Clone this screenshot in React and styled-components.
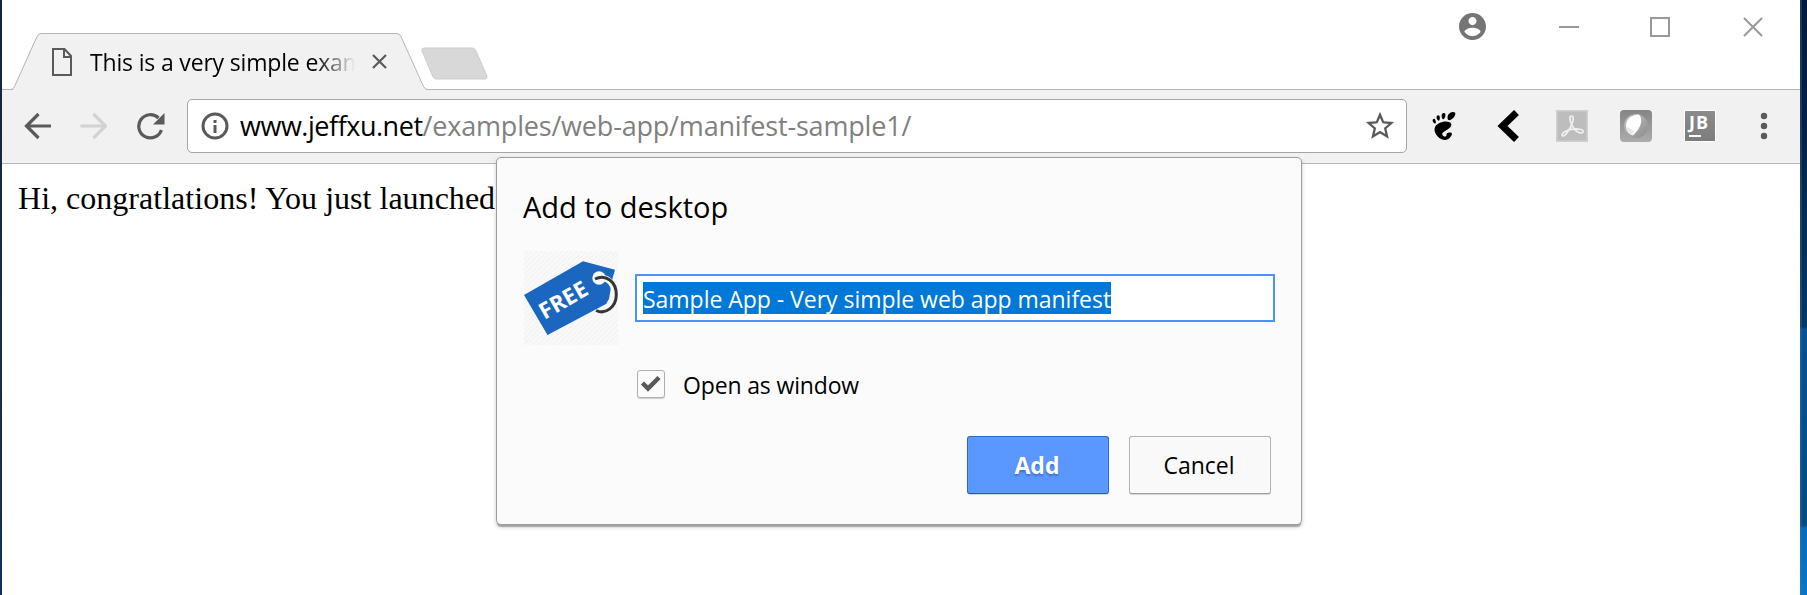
import React from 'react';
import styled, { createGlobalStyle } from 'styled-components';
import { SiGnome } from 'react-icons/si';

const ui = '"Open Sans", "Noto Sans", sans-serif';
const line = '#b6b4b6';
const ink = '#5a5a5a';

const GlobalStyle = createGlobalStyle`
  *, *::before, *::after { box-sizing: border-box; }
  body { margin: 0; overflow: hidden; background: #fff; font-family: ${ui}; color: #000; }
  svg { display: block; flex: none; }
`;

const Desktop = styled.div`
  display: flex;
  width: 1807px;
  height: 595px;
  overflow: hidden;
`;

const LeftEdge = styled.div`
  width: 2px;
  background: linear-gradient(#12233c, #1c2d47 60%, #12305a);
`;

const RightEdge = styled.div`
  width: 7px;
  border-left: 2px solid rgba(90, 110, 130, 0.35);
  background: linear-gradient(#001a3c 0, #002048 120px, #003868 327px, #00529a 329px, #004f90 420px, #004c88 525px, #006cc4 528px, #0078d2 595px);
  background-origin: border-box;
`;

const Browser = styled.div`
  position: relative;
  display: flex;
  flex-direction: column;
  width: 1798px;
  background: #fff;
`;

const TitleBar = styled.header`
  display: flex;
  align-items: flex-end;
  height: 90px;
  padding-left: 9px;
  box-shadow: inset 0 -1px ${line};
`;

const Tab = styled.div`
  position: relative;
  display: flex;
  align-items: center;
  width: 417px;
  height: 57px;
  padding: 0 0 0 41px;
`;

const TabShape = styled.svg`
  position: absolute;
  inset: 0;
`;

const TabTitle = styled.span`
  position: relative;
  width: 265px;
  margin: 0 17px 0 18px;
  overflow: hidden;
  white-space: nowrap;
  font-size: 23px;
  line-height: 36px;
  letter-spacing: -0.17px;
  mask-image: linear-gradient(90deg, #000 225px, transparent 265px);
`;

const TabIcon = styled.svg`
  position: relative;
`;

const NewTab = styled.svg`
  margin: 0 0 9px -8px;
`;

const Controls = styled.div`
  display: flex;
  align-items: center;
  align-self: flex-start;
  height: 54px;
  margin-left: auto;
  padding-right: 37px;
  gap: 71px;
`;

const Avatar = styled.svg`
  margin: 0 2px 2px 0;
`;

const WindowIcon = styled.svg`
  margin-right: ${(p) => p.$after || 0}px;
  fill: none;
  stroke: #999;
  stroke-width: 2;
`;

const Toolbar = styled.div`
  display: flex;
  align-items: center;
  height: 74px;
  padding: 0 20px 2px 21px;
  background: #f1f1f1;
  border-bottom: 1px solid ${line};
`;

const NavButtons = styled.div`
  display: flex;
  flex: none;
  gap: 28px;
  width: 164px;
`;

const NavIcon = styled.svg`
  fill: none;
  stroke: ${(p) => (p.$disabled ? '#d2d2d2' : ink)};
  stroke-width: 3.2;
`;

const Omnibox = styled.div`
  display: flex;
  flex: none;
  align-items: center;
  width: 1220px;
  height: 54px;
  padding: 0 9px 0 13px;
  background: #fff;
  border: 1px solid #a5a5a5;
  border-radius: 5px;
`;

const Url = styled.div`
  flex: 1;
  padding-left: 11px;
  font-size: 27px;
  line-height: 50px;
  letter-spacing: -0.19px;
  color: #808080;
`;

const Host = styled.span`
  color: #000;
  letter-spacing: -0.47px;
`;

const Extensions = styled.div`
  display: flex;
  align-items: center;
  flex: none;
  gap: 32px;
  margin-left: 21px;
`;

const ExtensionSlot = styled.div`
  display: flex;
  align-items: center;
  justify-content: center;
  width: 32px;
  height: 32px;
`;

const JetBrains = styled.div`
  width: 32px;
  height: 32px;
  padding: 1px 0 0 4px;
  border: 1.5px solid #fff;
  background: linear-gradient(#8c8c8c, #7c7c7c);
  color: #fff;
  font: 700 18px/21px ${ui};
  letter-spacing: 1px;
`;

const Underscore = styled.div`
  width: 12px;
  height: 2px;
  margin-top: 2px;
  background: #fff;
`;

const Page = styled.main`
  padding: 17px 16px;
  font: 32px/35px "Liberation Serif", serif;
  letter-spacing: 0.02px;
  white-space: nowrap;
`;

const Dialog = styled.section`
  position: absolute;
  top: 157px;
  left: 494px;
  width: 806px;
  height: 368px;
  padding: 29px 26px 30px 27px;
  background: #fbfbfb;
  border: 1px solid #9d9d9d;
  border-radius: 5px;
  box-shadow: 0 3px 1px -1px rgba(0, 0, 0, 0.25), 0 2px 4px rgba(0, 0, 0, 0.2);
`;

const Heading = styled.h1`
  margin: 0 0 0 -1px;
  font-size: 29px;
  font-weight: 400;
  line-height: 40px;
`;

const NameRow = styled.div`
  display: flex;
  align-items: center;
  gap: 17px;
  height: 94px;
  margin-top: 24px;
`;

const AppIcon = styled.div`
  width: 94px;
  height: 94px;
  background: repeating-linear-gradient(135deg, #f9f9f9 0 2px, #f4f4f4 2px 3.5px);
`;

const NameField = styled.div`
  width: 640px;
  height: 48px;
  padding: 6px;
  border: 2px solid #4d90fe;
  background: #fff;
`;

const Selection = styled.span`
  display: block;
  width: 468px;
  height: 32px;
  background: #0078d7;
  color: #fff;
  font-size: 23px;
  line-height: 34px;
  letter-spacing: -0.03px;
  white-space: nowrap;
`;

const WindowOption = styled.label`
  display: flex;
  align-items: center;
  gap: 18px;
  height: 28px;
  margin: 25px 0 0 113px;
  font-size: 23px;
  line-height: 28px;
  letter-spacing: -0.15px;
`;

const CheckBox = styled.span`
  display: flex;
  align-items: center;
  justify-content: center;
  width: 28px;
  height: 28px;
  border: 1px solid #b0b0b0;
  border-radius: 3px;
  background: #fbfbfb;
  box-shadow: 0 1px 1px rgba(0, 0, 0, 0.18);
`;

const OptionText = styled.span`
  padding-top: 1px;
`;

const Actions = styled.div`
  display: flex;
  justify-content: flex-end;
  gap: 20px;
  margin: 38px 4px 0 0;
`;

const Button = styled.button`
  width: 142px;
  height: 58px;
  padding: 0 2px 0 0;
  border: 1px solid ${(p) => (p.$primary ? '#2f64ca' : '#b2b2b2')};
  border-bottom-color: ${(p) => (p.$primary ? '#2456b4' : '#9c9c9c')};
  border-radius: 3px;
  background: ${(p) => (p.$primary ? '#5a97ff' : '#f9f9f9')};
  box-shadow: 0 1px 1px rgba(0, 0, 0, 0.15), inset 0 0 0 1px rgba(255, 255, 255, ${(p) => (p.$primary ? 0.06 : 0.6)});
  color: ${(p) => (p.$primary ? '#fff' : '#000')};
  font: ${(p) => (p.$primary ? '700 23px' : '400 23px')} ${ui};
  text-shadow: ${(p) => (p.$primary ? '0 2px 2px rgba(0, 30, 100, 0.3)' : 'none')};
`;

function ActiveTab() {
  return (
    <Tab>
      <TabShape width="417" height="57" viewBox="0 0 417 57">
        <path
          d="M0 56.5 Q2.5 56 3.5 53.5 L26 3.5 Q27.5 .5 30 .5 H386 Q388.5 .5 390 3.5 L412.5 53.5 Q414 56.5 417 56.5"
          fill="#f1f1f1"
          stroke={line}
        />
        <path d="M2.5 56.5H414.5" stroke="#f1f1f1" />
      </TabShape>
      <TabIcon width="20" height="28" viewBox="0 0 20 28" fill="none" stroke={ink} strokeWidth="2">
        <path d="M1 1H12.5L19 8V27H1Z" />
        <path d="M12 1V9H19" />
      </TabIcon>
      <TabTitle>This is a very simple example</TabTitle>
      <TabIcon width="15" height="15" viewBox="0 0 15 15" stroke={ink} strokeWidth="2.2">
        <path d="M1 1L14 14M14 1L1 14" />
      </TabIcon>
    </Tab>
  );
}

function WindowControls() {
  return (
    <Controls>
      <Avatar width="27" height="27" viewBox="2 2 20 20" fill="#757575">
        <path d="M12 2C6.48 2 2 6.48 2 12s4.48 10 10 10 10-4.48 10-10S17.52 2 12 2zm0 3c1.66 0 3 1.34 3 3s-1.34 3-3 3-3-1.34-3-3 1.34-3 3-3zm0 14.2c-2.5 0-4.71-1.28-6-3.22.03-1.99 4-3.08 6-3.08 1.99 0 5.97 1.09 6 3.08-1.29 1.94-3.5 3.22-6 3.22z" />
      </Avatar>
      <WindowIcon width="20" height="20">
        <path d="M0 10H20" />
      </WindowIcon>
      <WindowIcon width="20" height="20" $after={2}>
        <path d="M1 1H19V19H1Z" />
      </WindowIcon>
      <WindowIcon width="20" height="20">
        <path d="M1 1L19 19M19 1L1 19" />
      </WindowIcon>
    </Controls>
  );
}

function Navigation() {
  return (
    <NavButtons>
      <NavIcon width="28" height="28" viewBox="0 0 28 28">
        <path d="M28 14H4M15.5 2L3.5 14L15.5 26" />
      </NavIcon>
      <NavIcon width="28" height="28" viewBox="0 0 28 28" $disabled>
        <path d="M1.500 14H26M14.500 2L26.500 14L14.500 26" />
      </NavIcon>
      <NavIcon width="30" height="28" viewBox="0 0 30 28">
        <path d="M26.4 18A11.6 11.6 0 1 1 23.5 6" />
        <path d="M29.500 1V12.5H18Z" fill={ink} stroke="none" />
      </NavIcon>
    </NavButtons>
  );
}

function ExtensionIcons() {
  return (
    <Extensions>
      <ExtensionSlot>
        <SiGnome size={28} color="#000" />
      </ExtensionSlot>
      <ExtensionSlot>
        <svg width="32" height="32" fill="none" stroke="#000" strokeWidth="7">
          <path d="M24.5 2.5L10.5 16L24.5 29.5" />
        </svg>
      </ExtensionSlot>
      <ExtensionSlot>
        <svg width="32" height="32">
          <rect x=".75" y=".75" width="30.5" height="30.5" fill="#bdbdbd" stroke="#d0d0d0" strokeWidth="1.5" />
          <path
            d="M15.8 15C13 9 13.5 6 15.5 6S18 9 15.7 15C13 20 10 25.5 7.5 26S5.5 22.5 11 20.5S21 18.5 25 19.5S27 24 23 22.5S18 19 15.8 15"
            fill="none"
            stroke="#f0f0f0"
            strokeWidth="1.7"
          />
        </svg>
      </ExtensionSlot>
      <ExtensionSlot>
        <svg width="32" height="32">
          <defs>
            <linearGradient id="tile" x2="0" y2="1">
              <stop stopColor="#858585" />
              <stop offset="1" stopColor="#acacac" />
            </linearGradient>
            <linearGradient id="ball" x2="1" y2="1">
              <stop stopColor="#c4c4c4" />
              <stop offset="1" stopColor="#8c8c8c" />
            </linearGradient>
          </defs>
          <rect width="32" height="32" rx="4" fill="url(#tile)" />
          <circle cx="16" cy="16" r="12" fill="url(#ball)" />
          <path d="M6 16C6 9 11 5 19 4.5C23 9 22 17 13 25.5C8 24 6 20 6 16Z" fill="#fff" />
          <path d="M6 16.5L14 21L11 25C8 23 6.2 20 6 16.5Z" fill="#e6e6e6" />
        </svg>
      </ExtensionSlot>
      <JetBrains>
        JB
        <Underscore />
      </JetBrains>
      <ExtensionSlot>
        <svg width="32" height="32" fill={ink}>
          <circle cx="16" cy="6" r="3.2" />
          <circle cx="16" cy="16" r="3.2" />
          <circle cx="16" cy="26" r="3.2" />
        </svg>
      </ExtensionSlot>
    </Extensions>
  );
}

function PriceTag() {
  return (
    <svg width="94" height="94">
      <path d="M0 44L59 10.3L91 18.8L88.5 27.5L85 48L82 53L23.5 84Z" fill="#1b67bf" />
      <path d="M79 27C91 28 96 50 84 58" fill="none" stroke="#f8f8f8" strokeWidth="6" />
      <circle cx="75" cy="27" r="6.7" fill="#f8f8f8" />
      <path d="M71 28C82 22.5 92.5 31 92.3 44C92 56 82 64 72 59.5" fill="none" stroke="#363636" strokeWidth="3" />
      <text
        transform="translate(20.5 69) rotate(-30)"
        fill="#fff"
        fontFamily="Open Sans, sans-serif"
        fontSize="22.5"
        fontWeight="700"
      >
        FREE
      </text>
    </svg>
  );
}

function AddToDesktop() {
  return (
    <Dialog>
      <Heading>Add to desktop</Heading>
      <NameRow>
        <AppIcon>
          <PriceTag />
        </AppIcon>
        <NameField>
          <Selection>Sample App - Very simple web app manifest</Selection>
        </NameField>
      </NameRow>
      <WindowOption>
        <CheckBox>
          <svg width="22" height="18" fill="none" stroke={ink} strokeWidth="4.5">
            <path d="M2.5 8L8 13.5L19 2.5" />
          </svg>
        </CheckBox>
        <OptionText>Open as window</OptionText>
      </WindowOption>
      <Actions>
        <Button $primary>Add</Button>
        <Button>Cancel</Button>
      </Actions>
    </Dialog>
  );
}

export default function App() {
  return (
    <Desktop>
      <GlobalStyle />
      <LeftEdge />
      <Browser>
        <TitleBar>
          <ActiveTab />
          <NewTab width="68" height="35" viewBox="0 0 68 35">
            <path d="M4 2H52Q54.5 2 55.5 4L67 30Q67.5 33 65 33H16Q14 33 13 31L2 5Q1.5 2 4 2Z" fill="#d8d8d8" stroke="#cdcdcd" />
          </NewTab>
          <WindowControls />
        </TitleBar>
        <Toolbar>
          <Navigation />
          <Omnibox>
            <svg width="28" height="28" fill={ink}>
              <circle cx="14" cy="14" r="12" fill="none" stroke={ink} strokeWidth="3" />
              <path d="M12.5 8H15.5V11H12.5ZM12.5 13H15.5V21H12.5Z" />
            </svg>
            <Url>
              <Host>www.jeffxu.net</Host>/examples/web-app/manifest-sample1/
            </Url>
            <svg width="34" height="34" viewBox="0 0 24 24" fill={ink}>
              <path d="M22 9.24l-7.19-.62L12 2 9.19 8.63 2 9.24l5.46 4.73L5.82 21 12 17.27 18.18 21l-1.63-7.03L22 9.24zM12 15.4l-3.76 2.27 1-4.28-3.32-2.88 4.38-.38L12 6.1l1.71 4.04 4.38.38-3.32 2.88 1 4.28L12 15.4z" />
            </svg>
          </Omnibox>
          <ExtensionIcons />
        </Toolbar>
        <Page>Hi, congratlations! You just launched</Page>
        <AddToDesktop />
      </Browser>
      <RightEdge />
    </Desktop>
  );
}
